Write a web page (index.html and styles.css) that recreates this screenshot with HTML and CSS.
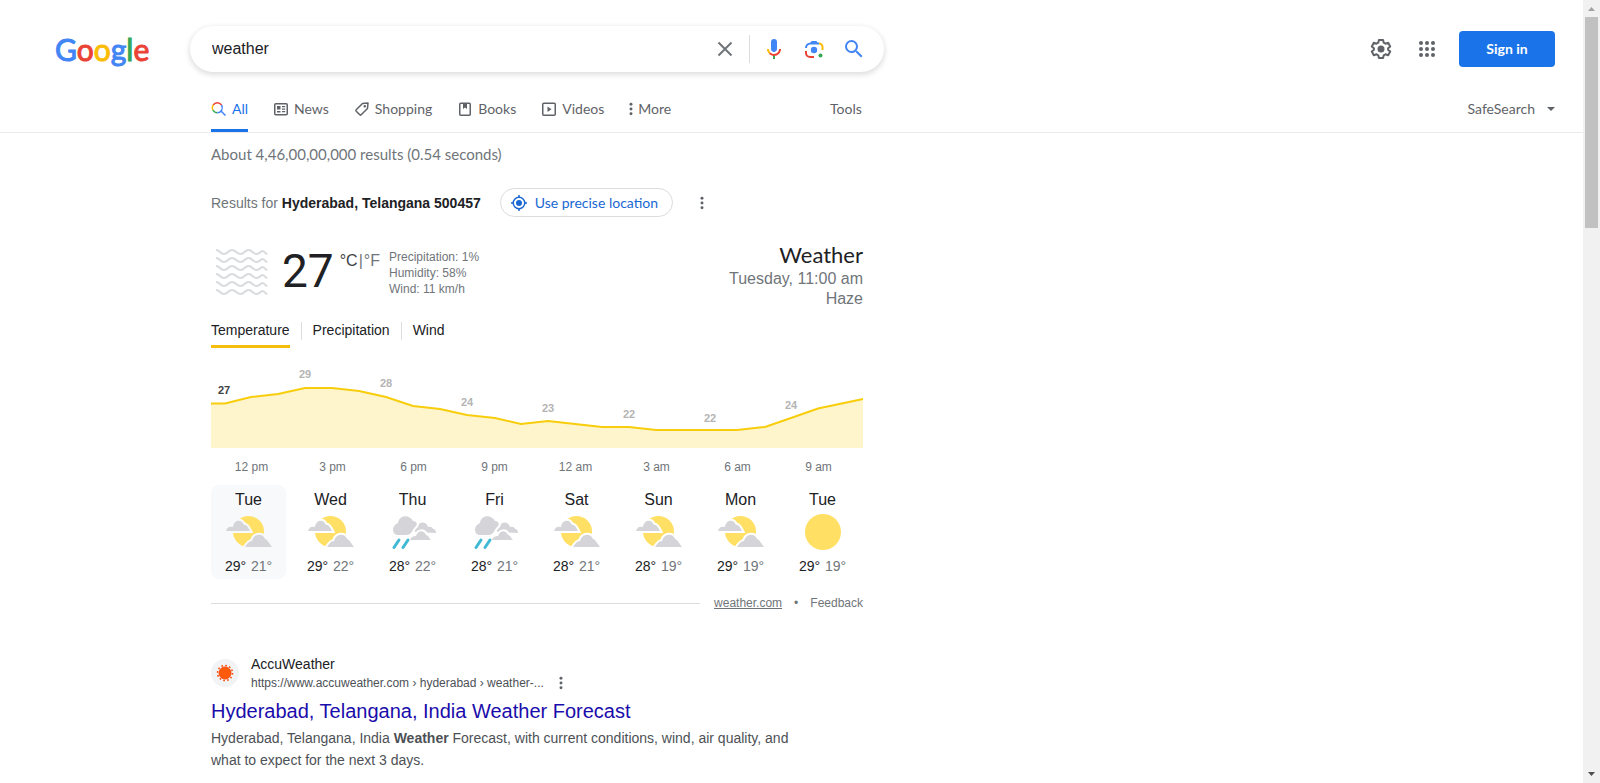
FILE: index.html
```html
<!DOCTYPE html>
<html lang="en">
<head>
<meta charset="utf-8">
<title>weather - Google Search</title>
<link rel="stylesheet" href="styles.css">
</head>
<body>
<svg class="sprite" aria-hidden="true">
  <symbol id="partly-cloudy" viewBox="0 0 48 48">
    <circle cx="23.500" cy="23.500" r="15.500" fill="#ffe064"/>
    <path class="gap" d="M1 23c1-4 4-5 7-4 1-8 9-8 11-2 2-1 4 2 6 6z"/>
    <path class="gap" d="M20 39c2-3 4-6 7-6 2-8 11-8 13-2 2 0 4 4 7 8z"/>
    <path class="cloud" d="M1 23c1-4 4-5 7-4 1-8 9-8 11-2 2-1 4 2 6 6z"/>
    <path class="cloud" d="M20 39c2-3 4-6 7-6 2-8 11-8 13-2 2 0 4 4 7 8z"/>
  </symbol>
  <symbol id="rain" viewBox="0 0 48 48">
    <path class="cloud" d="M26 24c-1-4 0-7 3-7 3-4 9-3 10 2 3-1 5 1 5 2 2 0 3 2 3 4z"/>
    <path class="gap" d="M8 27c-5-1-6-9 1-12 1-8 11-9 15-2 4 0 5 4 2 6-3 3-3 8-9 8z"/>
    <path class="cloud" d="M8 27c-5-1-6-9 1-12 1-8 11-9 15-2 4 0 5 4 2 6-3 3-3 8-9 8z"/>
    <path class="gap" d="M21 32c1-3 3-4 6-4 2-6 8-6 10-1 2 0 3 3 5 5z"/>
    <path class="cloud" d="M21 32c1-3 3-4 6-4 2-6 8-6 10-1 2 0 3 3 5 5z"/>
    <path d="M10 32l-5 7.500M19 32l-5 7.500" stroke="#40b9d4" stroke-width="3" stroke-linecap="round"/>
  </symbol>
  <symbol id="sunny" viewBox="0 0 48 48"><circle cx="24" cy="24" r="18" fill="#ffe064"/></symbol>
  <symbol id="dots" viewBox="0 0 4 16"><circle cx="2" cy="2.500" r="1.700"/><circle cx="2" cy="8" r="1.700"/><circle cx="2" cy="13.500" r="1.700"/></symbol>
  <symbol id="wave" viewBox="0 0 52 8"><path d="M0 2c4 0 4 4 8 4s4-4 8-4 4.500 4 8.500 4 4-4 8-4 4 4 8 4 3.500-3 6-3 2 3 5 3" fill="none" stroke="#d9dbde" stroke-width="2"/></symbol>
</svg>

<header class="header">
  <div class="top">
    <a class="logo" href="#" aria-label="Google"><span class="blue">G</span><span class="red">o</span><span class="yellow">o</span><span class="blue">g</span><span class="green">l</span><span class="red">e</span></a>
    <form class="search" role="search">
      <input class="query" type="text" value="weather" aria-label="Search">
      <button class="icon-button clear" type="button" aria-label="Clear"><svg width="24" height="24" viewBox="0 0 24 24"><path d="M5.500 5.500l13 13M18.500 5.500l-13 13" stroke="#70757a" stroke-width="2"/></svg></button>
      <button class="icon-button" type="button" aria-label="Search by voice"><svg width="24" height="24" viewBox="0 0 24 24"><path fill="#4285f4" d="M12 15c1.660 0 3-1.310 3-2.970V5a3 3 0 0 0-6 0v7.030C9 13.690 10.340 15 12 15z"/><path fill="#34a853" d="M11 18.080h2V22h-2z"/><path fill="#fbbc04" d="M7.050 16.870C5.780 15.600 5 13.850 5 12h2c0 1.370.56 2.430 1.460 3.420l-1.410 1.450z"/><path fill="#ea4335" d="M12 16.930a4.970 5.250 0 0 1-3.540-1.550l-1.410 1.490c1.260 1.340 3.020 2.130 4.950 2.130 3.870 0 6.990-2.920 6.990-7H17c0 2.920-2.240 4.930-5 4.930z"/></svg></button>
      <button class="icon-button" type="button" aria-label="Search by image"><svg width="24" height="24" viewBox="0 0 24 24" fill="none" stroke-width="2"><path stroke="#ea4335" d="M4 14v2a4 4 0 0 0 4 4h4"/><path stroke="#fbbc04" d="M17 6.500a3.500 3.500 0 0 1 3.500 3.500v3"/><path stroke="#4285f4" d="M4 11a4.500 4.500 0 0 1 4.500-4.500H17"/><path fill="#4285f4" d="M8 6.500L9.500 4h5L16 6.500z"/><circle fill="#4285f4" cx="12" cy="13" r="3.200"/><circle fill="#34a853" cx="18.500" cy="18.500" r="2"/></svg></button>
      <button class="icon-button" type="submit" aria-label="Google Search"><svg width="24" height="24" viewBox="0 0 24 24"><path fill="#4285f4" d="M15.500 14h-.79l-.28-.27A6.470 6.470 0 0 0 16 9.500 6.500 6.500 0 1 0 9.500 16c1.610 0 3.090-.59 4.230-1.570l.27.28v.79l5 4.990L20.490 19zm-6 0a4.500 4.500 0 1 1 0-9 4.500 4.500 0 0 1 0 9z"/></svg></button>
    </form>
    <div class="account">
      <button class="icon-button" type="button" aria-label="Settings"><svg width="24" height="24" viewBox="0 0 24 24"><path d="M9.900 3h4.200l.6 2.700 1.800 1 2.700-.9 2 3.600-2.100 1.900v1.400l2.100 1.900-2 3.600-2.700-.9-1.800 1-.6 2.700H9.900l-.6-2.700-1.800-1-2.700.9-2-3.600 2.100-1.900v-1.400L2.800 9.400l2-3.600 2.700.9 1.800-1z" fill="none" stroke="#5f6368" stroke-width="2" stroke-linejoin="round"/><circle cx="12" cy="12" r="3.500" fill="#5f6368"/></svg></button>
      <button class="icon-button" type="button" aria-label="Google apps"><svg width="24" height="24" viewBox="0 0 24 24" fill="#5f6368"><circle cx="6" cy="6" r="2"/><circle cx="12" cy="6" r="2"/><circle cx="18" cy="6" r="2"/><circle cx="6" cy="12" r="2"/><circle cx="12" cy="12" r="2"/><circle cx="18" cy="12" r="2"/><circle cx="6" cy="18" r="2"/><circle cx="12" cy="18" r="2"/><circle cx="18" cy="18" r="2"/></svg></button>
      <a class="sign-in" href="#">Sign in</a>
    </div>
  </div>
  <div class="tabs">
    <nav class="tab-list" aria-label="Result types">
      <a class="tab active" href="#"><svg width="16" height="16" viewBox="0 0 16 16" fill="none" stroke-width="1.500"><path stroke="#ea4335" d="M2.200 4a5 5 0 0 1 8.300 0"/><path stroke="#fbbc04" d="M2.200 4a5 5 0 0 0-.3 5"/><path stroke="#34a853" d="M1.900 9a5 5 0 0 0 4.400 2.700"/><path stroke="#4285f4" d="M10.500 4a5 5 0 0 1-4.200 7.700M10 10l4.500 4.500"/></svg>All</a>
      <a class="tab" href="#"><svg width="16" height="16" viewBox="0 0 16 16"><rect x="1.750" y="2.750" width="12.500" height="11" rx="1" fill="none" stroke="currentColor" stroke-width="1.500"/><path d="M4 5h3.500v3.500H4zM4 10h3.500v1.500H4zM9 5h3.200v1.300H9zM9 7.500h3.200v1.300H9zM9 10h3.200v1.300H9z" fill="currentColor"/></svg>News</a>
      <a class="tab" href="#"><svg width="16" height="16" viewBox="0 0 16 16"><path d="M8.500 2.500L14 2l-.5 5.500-6.300 6.300a1 1 0 0 1-1.400 0L2.200 10.200a1 1 0 0 1 0-1.400z" fill="none" stroke="currentColor" stroke-width="1.500" stroke-linejoin="round"/><circle cx="10.800" cy="5.200" r="1.200" fill="currentColor"/></svg>Shopping</a>
      <a class="tab" href="#"><svg width="16" height="16" viewBox="0 0 16 16"><rect x="2.750" y="2.250" width="10.500" height="12" rx="1" fill="none" stroke="currentColor" stroke-width="1.500"/><path d="M6 2h4v6L8 6.500 6 8z" fill="currentColor"/></svg>Books</a>
      <a class="tab" href="#"><svg width="16" height="16" viewBox="0 0 16 16"><rect x="1.750" y="2.250" width="12.500" height="12" rx="1" fill="none" stroke="currentColor" stroke-width="1.500"/><path d="M6.500 5.500v5.400L10.500 8.200z" fill="currentColor"/></svg>Videos</a>
      <button class="tab" type="button"><svg width="4" height="14" fill="#5f6368"><use href="#dots"/></svg>More</button>
    </nav>
    <button class="tab" type="button">Tools</button>
    <button class="tab safe" type="button">SafeSearch<svg width="8" height="4" viewBox="0 0 8 4"><path d="M0 0h8L4 4z" fill="#5f6368"/></svg></button>
  </div>
</header>

<main class="content">
  <p class="stats">About 4,46,00,00,000 results (0.54 seconds)</p>

  <section class="weather" aria-label="Weather">
    <div class="location">
      <span>Results for <strong>Hyderabad, Telangana 500457</strong></span>
      <button class="precise" type="button"><svg width="16" height="16" viewBox="0 0 16 16"><circle cx="8" cy="8" r="5.750" fill="none" stroke="#1967d2" stroke-width="1.500"/><circle cx="8" cy="8" r="3" fill="#1967d2"/><path d="M8 0v2M8 14v2M0 8h2M14 8h2" stroke="#1967d2" stroke-width="1.500"/></svg>Use precise location</button>
      <button class="menu" type="button" aria-label="More options"><svg width="4" height="14"><use href="#dots"/></svg></button>
    </div>

    <div class="current">
      <div class="haze" role="img" aria-label="Haze">
        <svg><use href="#wave"/></svg><svg><use href="#wave"/></svg><svg><use href="#wave"/></svg><svg><use href="#wave"/></svg><svg><use href="#wave"/></svg><svg><use href="#wave"/></svg>
      </div>
      <span class="degrees">27</span>
      <span class="units">°C<span class="bar">|</span><a href="#">°F</a></span>
      <div class="details"><div>Precipitation: 1%</div><div>Humidity: 58%</div><div>Wind: 11 km/h</div></div>
      <div class="summary"><h2>Weather</h2><div>Tuesday, 11:00 am</div><div>Haze</div></div>
    </div>

    <div class="metrics">
      <button class="metric selected" type="button">Temperature</button>
      <button class="metric" type="button">Precipitation</button>
      <button class="metric" type="button">Wind</button>
    </div>

    <svg class="chart" viewBox="0 0 652 80" role="img" aria-label="Temperature by hour">
      <path fill="#fff5cc" d="M0 35.500H14L40 29l27-3 27-6h27l27 3 27 6 27 9 27 3 27 6 28 3 26 6 27-3 27 3 27 3h27l27 3h81l28-3 26-9 27-9.500L652 31V80H0z"/>
      <path fill="none" stroke="#f8cd0c" stroke-width="2" d="M0 35.500H14L40 29l27-3 27-6h27l27 3 27 6 27 9 27 3 27 6 28 3 26 6 27-3 27 3 27 3h27l27 3h81l28-3 26-9 27-9.500L652 31"/>
      <g class="values"><text class="now" x="13" y="26">27</text><text x="94" y="10">29</text><text x="175" y="19">28</text><text x="256" y="38">24</text><text x="337" y="44">23</text><text x="418" y="50">22</text><text x="499" y="54">22</text><text x="580" y="41">24</text></g>
    </svg>
    <div class="hours"><span>12 pm</span><span>3 pm</span><span>6 pm</span><span>9 pm</span><span>12 am</span><span>3 am</span><span>6 am</span><span>9 am</span></div>

    <div class="days">
      <div class="day today"><span class="name">Tue</span><svg><use href="#partly-cloudy"/></svg><span class="range">29° <span>21°</span></span></div>
      <div class="day"><span class="name">Wed</span><svg><use href="#partly-cloudy"/></svg><span class="range">29° <span>22°</span></span></div>
      <div class="day"><span class="name">Thu</span><svg><use href="#rain"/></svg><span class="range">28° <span>22°</span></span></div>
      <div class="day"><span class="name">Fri</span><svg><use href="#rain"/></svg><span class="range">28° <span>21°</span></span></div>
      <div class="day"><span class="name">Sat</span><svg><use href="#partly-cloudy"/></svg><span class="range">28° <span>21°</span></span></div>
      <div class="day"><span class="name">Sun</span><svg><use href="#partly-cloudy"/></svg><span class="range">28° <span>19°</span></span></div>
      <div class="day"><span class="name">Mon</span><svg><use href="#partly-cloudy"/></svg><span class="range">29° <span>19°</span></span></div>
      <div class="day"><span class="name">Tue</span><svg><use href="#sunny"/></svg><span class="range">29° <span>19°</span></span></div>
    </div>

    <div class="source"><a class="provider" href="#">weather.com</a><span class="bullet">•</span><a href="#">Feedback</a></div>
  </section>

  <article class="result">
    <div class="site">
      <span class="favicon"><svg width="18" height="18" viewBox="0 0 18 18"><circle cx="9" cy="9" r="7.500" fill="none" stroke="#f64a0a" stroke-width="1.500" stroke-dasharray="1.700 2.227"/><circle cx="9" cy="9" r="6" fill="#ff5a0a" stroke="#f64a0a"/></svg></span>
      <div>
        <div class="site-name">AccuWeather</div>
        <div class="site-url">https://www.accuweather.com › hyderabad › weather-...<button class="menu" type="button" aria-label="About this result"><svg width="4" height="14"><use href="#dots"/></svg></button></div>
      </div>
    </div>
    <h3 class="result-title"><a href="#">Hyderabad, Telangana, India Weather Forecast</a></h3>
    <p class="snippet">Hyderabad, Telangana, India <strong>Weather</strong> Forecast, with current conditions, wind, air quality, and what to expect for the next 3 days.</p>
  </article>
</main>

<div class="scrollbar" aria-hidden="true">
  <svg width="17" height="17" viewBox="0 0 17 17"><path d="M5 11h7L8.500 7z" fill="#a3a3a3"/></svg>
  <div class="thumb"></div>
  <svg class="down" width="17" height="17" viewBox="0 0 17 17"><path d="M5 6h7l-3.500 4z" fill="#505050"/></svg>
</div>
</body>
</html>
```

FILE: styles.css
```css
* { box-sizing: border-box; }
body {
  margin: 0;
  padding-right: 17px;
  height: 100vh;
  overflow: hidden;
  background: #fff;
  color: #202124;
  font: 14px/20px "Liberation Sans", Arial, sans-serif;
}
a { color: inherit; text-decoration: none; }
button { padding: 0; border: 0; background: none; color: inherit; font: inherit; cursor: pointer; }
svg { display: block; flex: none; }
h2, h3, p { margin: 0; font-weight: 400; }
.sprite { position: absolute; width: 0; height: 0; }

.header { border-bottom: 1px solid #ebebeb; }
.top { display: flex; align-items: center; padding: 26px 28px 0 0; }
.logo { width: 190px; padding-left: 55px; font: 30px/40px Lato, sans-serif; -webkit-text-stroke: 1px; }
.blue { color: #4285f4; }
.red { color: #ea4335; }
.yellow { color: #fbbc05; }
.green { color: #34a853; }
.search {
  display: flex;
  align-items: center;
  width: 694px;
  height: 46px;
  padding: 0 10px 0 22px;
  border-radius: 24px;
  background: #fff;
  box-shadow: 0 2px 5px 1px rgba(64, 60, 67, .16);
}
.query { flex: 1; min-width: 0; padding: 0; border: 0; outline: 0; color: #202124; font: 16px/24px "Liberation Sans", Arial, sans-serif; }
.icon-button { display: grid; place-items: center; width: 40px; height: 40px; }
.clear { box-sizing: content-box; width: 24px; height: 28px; margin-right: 4px; padding-right: 12px; border-right: 1px solid #dadce0; }
.account { display: flex; align-items: center; gap: 6px; margin-left: auto; }
.sign-in {
  width: 96px;
  margin-left: 6px;
  border-radius: 4px;
  background: #1a73e8;
  color: #fff;
  text-align: center;
  font: 700 14px/36px Lato, sans-serif;
}

.tabs { display: flex; padding: 17px 28px 0 211px; color: #5f6368; font: 14px/34px Lato, sans-serif; }
.tab-list { display: flex; gap: 25px; width: 619px; }
.tab { display: flex; align-items: center; gap: 5px; height: 40px; }
.active { height: 43px; border-bottom: 3px solid #1a73e8; color: #1a73e8; }
.safe { gap: 12px; margin-left: auto; }
.menu svg { fill: #5f6368; }

.content { width: 652px; margin-left: 211px; }
.stats { padding-top: 11px; color: #70757a; font-family: Lato, sans-serif; font-size: 15px; }
.location { display: flex; align-items: center; margin-top: 24px; color: #70757a; }
.location strong { color: #202124; }
.precise {
  display: flex;
  align-items: center;
  gap: 8px;
  height: 29px;
  margin: 0 27px 0 19px;
  padding: 0 14px 0 10px;
  border: 1px solid #dadce0;
  border-radius: 16px;
  color: #1967d2;
  font-family: Lato, sans-serif;
}

.current { display: flex; align-items: flex-start; height: 72px; margin-top: 24px; color: #70757a; }
.haze { display: grid; gap: 0; margin: 7px 3px 0 5px; }
.haze svg { width: 52px; height: 8px; }
.degrees { margin: 0 6px 0 11px; color: #202124; font: 46px/60px Roboto, sans-serif; }
.units { padding-top: 10px; color: #3c4043; font-size: 16px; }
.units a, .bar { color: #70757a; }
.bar { margin: 0 1px; }
.details { margin: 8px 0 0 9px; font-size: 12px; line-height: 16px; }
.summary { margin-left: auto; text-align: right; font-size: 16px; }
.summary h2 { color: #202124; font: 22px/28px Lato, sans-serif; }

.metrics { display: flex; margin-top: 7px; }
.metric { height: 28px; padding-bottom: 5px; border-bottom: 3px solid transparent; color: #202124; line-height: 20px; }
.metric.selected { border-color: #f5bd0c; }
.metric + .metric::before { content: ""; display: inline-block; height: 18px; margin: 0 11px; border-left: 1px solid #dadce0; vertical-align: middle; }
.chart { width: 100%; margin-top: 20px; overflow: visible; }
.values { fill: #b4b4b4; font: bold 11px "Liberation Sans", Arial, sans-serif; text-anchor: middle; }
.now { fill: #3c4043; }
.hours { display: grid; grid-template-columns: repeat(8, 81px); padding-top: 10px; color: #70757a; font-size: 12px; line-height: 18px; text-align: center; }

.days { display: grid; grid-template-columns: repeat(8, 75px); gap: 7px; margin-top: 9px; }
.day { --tile: #fff; display: flex; flex-direction: column; align-items: center; height: 94px; padding-top: 5px; border-radius: 8px; }
.today { --tile: #f8f9fa; background: #f8f9fa; }
.day svg { width: 48px; height: 48px; margin: -2px 0 0; }
.cloud { fill: #d5d5d9; }
.gap { fill: var(--tile); stroke: var(--tile); stroke-width: 4; }
.name { font-size: 16px; }
.range span { margin-left: 1px; color: #70757a; }

.source { display: flex; align-items: center; margin-top: 14px; color: #70757a; font-size: 12px; }
.source::before { content: ""; flex: 1; margin-right: 14px; border-top: 1px solid #dadce0; }
.provider { text-decoration: underline; }
.bullet { margin: 0 12px; }

.result { width: 600px; margin-top: 41px; }
.site { display: flex; align-items: center; gap: 12px; }
.favicon { display: grid; place-items: center; width: 28px; height: 28px; border-radius: 50%; background: #f1f3f4; }
.site-url { display: flex; align-items: center; gap: 15px; color: #4d5156; font-size: 12px; line-height: 18px; }
.result-title { margin-top: 6px; color: #1a0dab; font-size: 20px; line-height: 26px; }
.snippet { margin-top: 3px; color: #4d5156; line-height: 22px; }

.scrollbar { position: fixed; top: 0; right: 0; bottom: 0; width: 17px; display: flex; flex-direction: column; background: #f1f1f1; }
.thumb { height: 27%; margin: 0 2px; background: #c1c1c1; }
.down { margin-top: auto; }
```
